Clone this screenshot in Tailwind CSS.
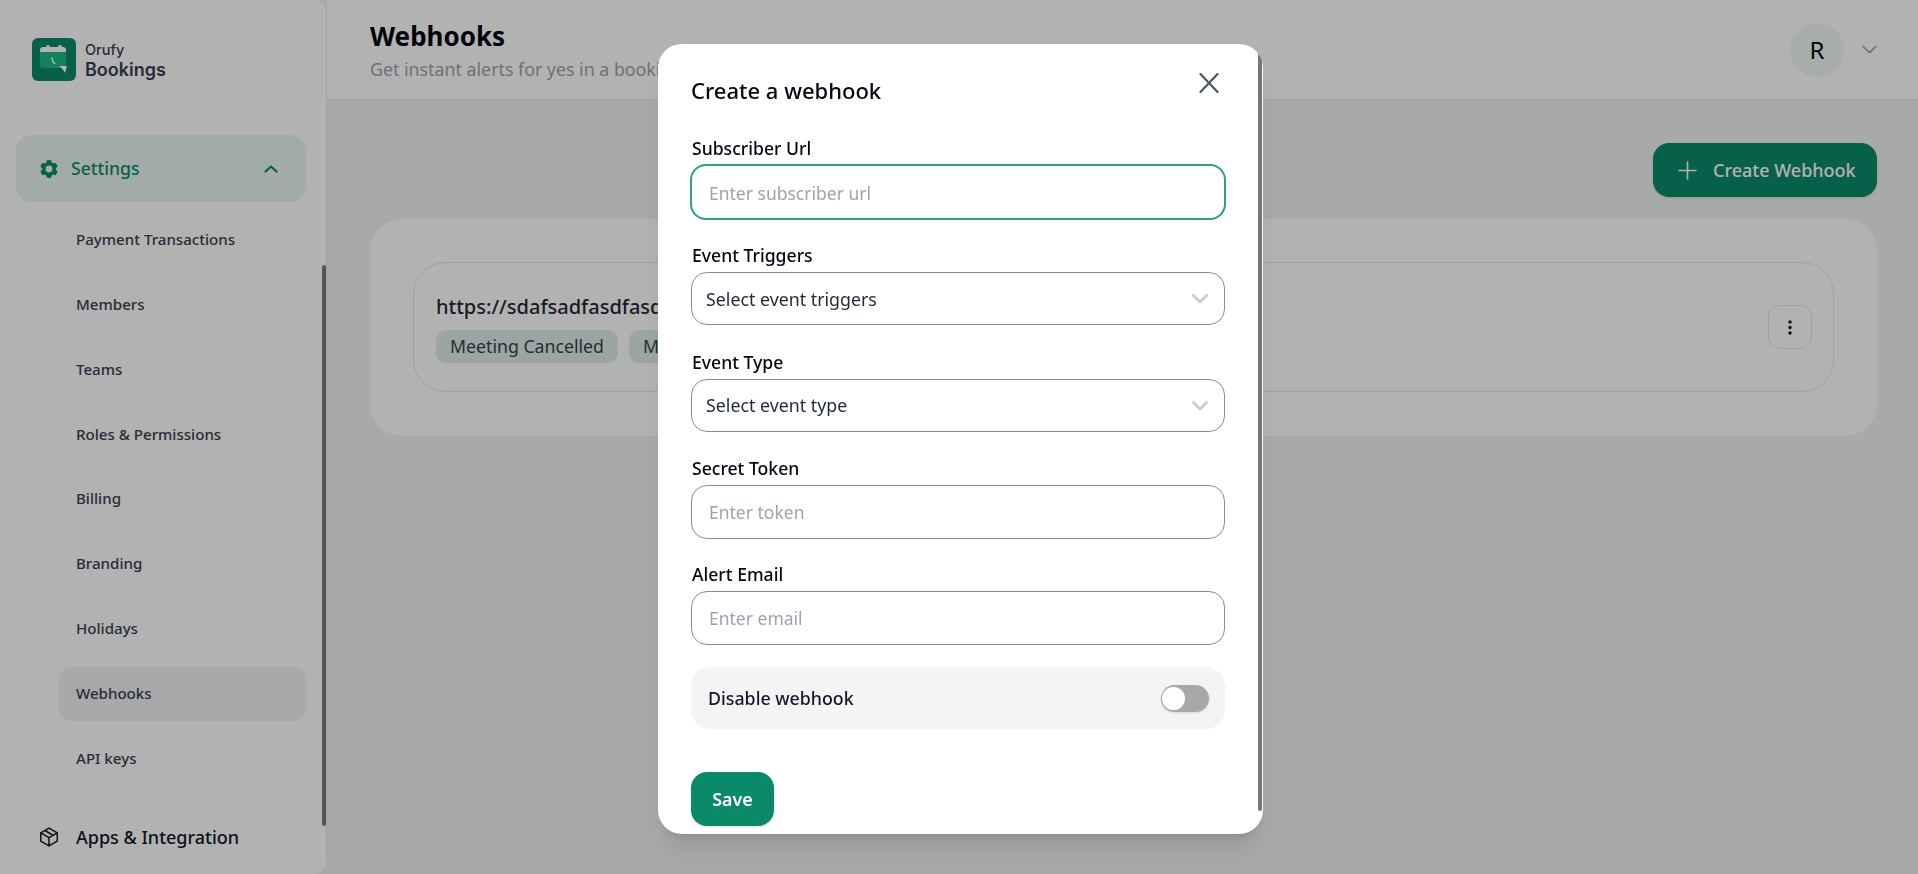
<!DOCTYPE html>
<html lang="en">

<head>
    <meta charset="UTF-8">
    <meta name="viewport" content="width=device-width, initial-scale=1.0">
    <title>Orufy Bookings - Webhooks</title>
    <script src="https://cdn.jsdelivr.net/npm/@tailwindcss/browser@4"></script>
</head>

<body class="h-screen overflow-hidden bg-[#f1f3f2] font-['Noto_Sans',sans-serif]">
    <div class="flex h-[874px]">
        <!-- Sidebar -->
        <aside class="relative w-[327px] h-full shrink-0 bg-white border-r border-[#e5e7eb] rounded-r-[12px] overflow-hidden">
            <div class="flex items-start gap-[9px] pl-8 pt-[38px] h-[135px]">
                <svg class="w-[44px] h-[43px]" viewBox="0 0 44 43">
                    <rect width="44" height="43" rx="6" fill="#0b8a6a" />
                    <path d="M8 12a3 3 0 0 1 3-3h3a2 2 0 0 1 4 0h8a2 2 0 0 1 4 0h1a3 3 0 0 1 3 3v3H8z" fill="#ffffff" />
                    <path d="M8 14h26v13l-1 3H11a3 3 0 0 1-3-3z" fill="#1cb98a" />
                    <path d="M20 20l1 4 2 1.500" fill="none" stroke="#ffffff" stroke-width="1.400" stroke-linecap="round" />
                    <path d="M27 28h8l-2 7-2-3.500z" fill="#ffffff" />
                </svg>
                <div class="font-['Inter',sans-serif] text-[#374151]">
                    <div class="text-[14.5px] leading-[16px] font-medium mt-[4px]">Orufy</div>
                    <div class="text-[18px] leading-[22px] font-semibold mt-[1px]">Bookings</div>
                </div>
            </div>

            <div class="flex items-center w-[290px] ml-4 h-[67px] pl-6 pr-[28px] rounded-[16px] bg-[#e8f5f0] text-[#0b8a6a]">
                <svg class="w-[22px] h-[22px] -ml-[2px]" viewBox="0 0 24 24" fill="currentColor">
                    <path fill-rule="evenodd" clip-rule="evenodd" d="M11.078 2.25c-.917 0-1.699.663-1.85 1.567L9.05 4.889c-.02.12-.115.26-.297.348a7.493 7.493 0 0 0-.986.57c-.166.115-.334.126-.45.083L6.3 5.508a1.875 1.875 0 0 0-2.282.819l-.922 1.597a1.875 1.875 0 0 0 .432 2.385l.84.692c.095.078.17.229.154.43a7.598 7.598 0 0 0 0 1.139c.015.2-.059.352-.153.43l-.841.692a1.875 1.875 0 0 0-.432 2.385l.922 1.597a1.875 1.875 0 0 0 2.282.818l1.019-.382c.115-.043.283-.031.45.082.312.214.641.405.985.57.182.088.277.228.297.35l.178 1.071c.151.904.933 1.567 1.85 1.567h1.844c.916 0 1.699-.663 1.85-1.567l.178-1.072c.02-.12.114-.26.297-.349.344-.165.673-.356.985-.57.167-.114.335-.125.45-.082l1.02.382a1.875 1.875 0 0 0 2.28-.819l.923-1.597a1.875 1.875 0 0 0-.432-2.385l-.84-.692c-.095-.078-.17-.229-.154-.43a7.614 7.614 0 0 0 0-1.139c-.016-.2.059-.352.153-.43l.84-.692c.708-.582.891-1.59.433-2.385l-.922-1.597a1.875 1.875 0 0 0-2.282-.818l-1.02.382c-.114.043-.282.031-.449-.083a7.49 7.49 0 0 0-.985-.57c-.183-.087-.277-.227-.297-.348l-.179-1.072a1.875 1.875 0 0 0-1.85-1.567h-1.843ZM12 15.750a3.750 3.750 0 1 0 0-7.500 3.750 3.750 0 0 0 0 7.500Z" />
                </svg>
                <span class="ml-[11px] text-[17.6px] font-medium flex-1">Settings</span>
                <svg class="w-[14px] h-[10px]" viewBox="0 0 14 10" fill="none" stroke="currentColor" stroke-width="2.200" stroke-linecap="round" stroke-linejoin="round">
                    <path d="M1.500 7.500 7 2.500l5.500 5" />
                </svg>
            </div>

            <nav class="mt-[11px] flex flex-col gap-[10.8px] ml-[59px] w-[247px] text-[15.1px] font-medium text-[#374151]">
                <a class="h-[54px] flex items-center pl-[17px] pb-px rounded-[12px]">Payment Transactions</a>
                <a class="h-[54px] flex items-center pl-[17px] pb-px rounded-[12px]">Members</a>
                <a class="h-[54px] flex items-center pl-[17px] pb-px rounded-[12px]">Teams</a>
                <a class="h-[54px] flex items-center pl-[17px] pb-px rounded-[12px]">Roles &amp; Permissions</a>
                <a class="h-[54px] flex items-center pl-[17px] pb-px rounded-[12px]">Billing</a>
                <a class="h-[54px] flex items-center pl-[17px] pb-px rounded-[12px]">Branding</a>
                <a class="h-[54px] flex items-center pl-[17px] pb-px rounded-[12px]">Holidays</a>
                <a class="h-[54px] flex items-center pl-[17px] pb-px rounded-[12px] bg-[#f3f3f3]">Webhooks</a>
                <a class="h-[54px] flex items-center pl-[17px] pb-px rounded-[12px]">API keys</a>
            </nav>

            <div class="flex items-center mt-[25px] h-[54px] pl-[38px] text-[#111827]">
                <svg class="w-[22px] h-[22px]" viewBox="0 0 24 24" fill="none" stroke="currentColor" stroke-width="1.600" stroke-linecap="round" stroke-linejoin="round">
                    <path d="m21 7.500-9-5.250L3 7.500m18 0-9 5.250m9-5.250v9l-9 5.250M3 7.500l9 5.250M3 7.500v9l9 5.250m0-9v9M7.500 4.900l9 5.200" />
                </svg>
                <span class="ml-[16px] text-[18px] font-medium">Apps &amp; Integration</span>
            </div>

            <!-- Sidebar scrollbar -->
            <div class="absolute right-0 top-[265px] w-1 h-[561px] bg-[#7a7a7a] rounded-full"></div>
        </aside>

        <!-- Main -->
        <main class="flex-1 min-w-0">
            <header class="h-[100px] bg-white border-b border-[#e5e7eb] flex items-center justify-between pl-[43px] pr-[41px]">
                <div class="mt-[1px]">
                    <h1 class="text-[26px] leading-[32px] font-bold text-[#030712]">Webhooks</h1>
                    <p class="text-[17.8px] leading-[24px] text-[#9ca3af] mt-[5px]">Get instant alerts for yes in a booking</p>
                </div>
                <div class="flex items-center gap-[18px]">
                    <div class="w-[54px] h-[54px] rounded-full bg-[#f1f7f4] flex items-center justify-center text-[24px] text-[#030712]">R</div>
                    <svg class="w-[15px] h-[9px]" viewBox="0 0 15 9" fill="none" stroke="#9ca3af" stroke-width="1.600" stroke-linecap="round" stroke-linejoin="round">
                        <path d="M1 1.200 7.500 7.600 14 1.200" />
                    </svg>
                </div>
            </header>

            <div class="pl-[43px] pr-[41px] pt-[43px]">
                <div class="flex justify-end">
                    <button class="h-[54px] w-[224px] rounded-[16px] bg-[#0b8a6a] text-white flex items-center pl-[25px] shadow-sm">
                        <svg class="w-[19px] h-[19px]" viewBox="0 0 19 19" fill="none" stroke="currentColor" stroke-width="1.600" stroke-linecap="round">
                            <path d="M9.500 1v17M1 9.500h17" />
                        </svg>
                        <span class="ml-[16px] text-[18px] font-medium">Create Webhook</span>
                    </button>
                </div>

                <section class="mt-[22px] h-[217px] bg-white rounded-[32px] p-[43px]">
                    <div class="h-[130px] rounded-[32px] border border-[#e5e7eb] pl-[22px] pr-[21px] flex items-center justify-between">
                        <div class="pt-[4px]">
                            <div class="w-[260px] overflow-hidden whitespace-nowrap text-[20px] leading-[24px] font-medium text-[#1f2937]">https://sdafsadfasdfasdfasdf.com</div>
                            <div class="flex gap-[11px] mt-[11px]">
                                <span class="h-[33px] w-[182px] rounded-[10px] bg-[#deeee8] text-[#374151] text-[17.7px] flex items-center justify-center">Meeting Cancelled</span>
                                <span class="h-[33px] w-[70px] overflow-hidden whitespace-nowrap rounded-[10px] bg-[#deeee8] text-[#374151] text-[17.7px] flex items-center pl-[14px]">Meeting Created</span>
                            </div>
                        </div>
                        <button class="w-[44px] h-[44px] rounded-[12px] border border-[#e5e7eb] flex items-center justify-center text-[#0f172a]">
                            <svg class="w-1 h-[15px]" viewBox="0 0 4 15" fill="currentColor">
                                <circle cx="2" cy="2" r="1.700" />
                                <circle cx="2" cy="7.500" r="1.700" />
                                <circle cx="2" cy="13" r="1.700" />
                            </svg>
                        </button>
                    </div>
                </section>
            </div>
        </main>
    </div>

    <!-- Modal overlay -->
    <div class="fixed inset-0 bg-black/30">
        <div class="relative mt-[44px] ml-[658px] w-[605px] h-[790px] bg-white rounded-[24px] shadow-xl overflow-hidden pl-[32px] pr-[37px]">
            <div class="flex items-start justify-between h-[98px] pt-[29px]">
                <h2 class="text-[22px] leading-[34px] font-medium text-[#030712] ml-[1px]">Create a webhook</h2>
                <svg class="w-5 h-5 mr-[7px]" viewBox="0 0 20 20" fill="none" stroke="#4b5563" stroke-width="2.200" stroke-linecap="round">
                    <path d="M1.500 1 18.500 19M18.500 1 1.500 19" />
                </svg>
            </div>

            <label class="block h-[22px] leading-[20px] text-[17.6px] font-medium text-[#030712] -mt-[4px] ml-[2px]">Subscriber Url</label>
            <input class="block mt-[4px] w-[536px] h-[56px] rounded-[16px] border-2 border-[#2f9e83] pl-[17px] pt-[2px] text-[17.5px] outline-none placeholder:text-[#9ca3af]" placeholder="Enter subscriber url">

            <label class="block h-[22px] leading-[22px] text-[17.6px] font-medium text-[#030712] mt-[24px] ml-[2px]">Event Triggers</label>
            <div class="mt-[6px] ml-px w-[534px] h-[53px] rounded-[16px] border border-[#8c8c8c] pl-[14px] pr-[16px] pt-px flex items-center justify-between text-[17.8px] text-[#1f2937]">
                <span>Select event triggers</span>
                <svg class="w-4 h-[10px]" viewBox="0 0 16 10" fill="none" stroke="#c8ccd0" stroke-width="2.800" stroke-linecap="round" stroke-linejoin="round">
                    <path d="M1.500 1.500 8 8l6.500-6.500" />
                </svg>
            </div>

            <label class="block h-[22px] leading-[22px] text-[17.6px] font-medium text-[#030712] mt-[26px] ml-[2px]">Event Type</label>
            <div class="mt-[6px] ml-px w-[534px] h-[53px] rounded-[16px] border border-[#8c8c8c] pl-[14px] pr-[16px] flex items-center justify-between text-[17.8px] text-[#1f2937]">
                <span>Select event type</span>
                <svg class="w-4 h-[10px]" viewBox="0 0 16 10" fill="none" stroke="#c8ccd0" stroke-width="2.800" stroke-linecap="round" stroke-linejoin="round">
                    <path d="M1.500 1.500 8 8l6.500-6.500" />
                </svg>
            </div>

            <label class="block h-[22px] leading-[22px] text-[17.6px] font-medium text-[#030712] mt-[25px] ml-[2px]">Secret Token</label>
            <input class="block mt-[6px] ml-px w-[534px] h-[54px] rounded-[16px] border border-[#8c8c8c] pl-[17px] text-[17.5px] outline-none placeholder:text-[#9ca3af]" placeholder="Enter token">

            <label class="block h-[22px] leading-[22px] text-[17.6px] font-medium text-[#030712] mt-[24px] ml-[2px]">Alert Email</label>
            <input class="block mt-[6px] ml-px w-[534px] h-[54px] rounded-[16px] border border-[#8c8c8c] pl-[17px] text-[17.5px] outline-none placeholder:text-[#9ca3af]" placeholder="Enter email">

            <div class="mt-[22px] ml-px w-[534px] h-[62px] rounded-[20px] bg-[#f4f4f5] pl-[17px] pr-[16px] flex items-center justify-between">
                <span class="text-[17.8px] font-medium text-[#111827]">Disable webhook</span>
                <span class="relative block w-[48px] h-[27px] rounded-full bg-[#a8a8a8] shadow-sm">
                    <span class="absolute left-[1px] top-[2px] w-[23px] h-[23px] rounded-full bg-white"></span>
                </span>
            </div>

            <button class="block mt-[43px] ml-px w-[83px] h-[54px] rounded-[16px] bg-[#0b8a6a] text-white text-[17.8px] font-semibold shadow-sm">Save</button>

            <!-- Modal scrollbar -->
            <div class="absolute right-px top-[1px] w-1 h-[766px] bg-[#757575] rounded-full"></div>
        </div>
    </div>
</body>

</html>
